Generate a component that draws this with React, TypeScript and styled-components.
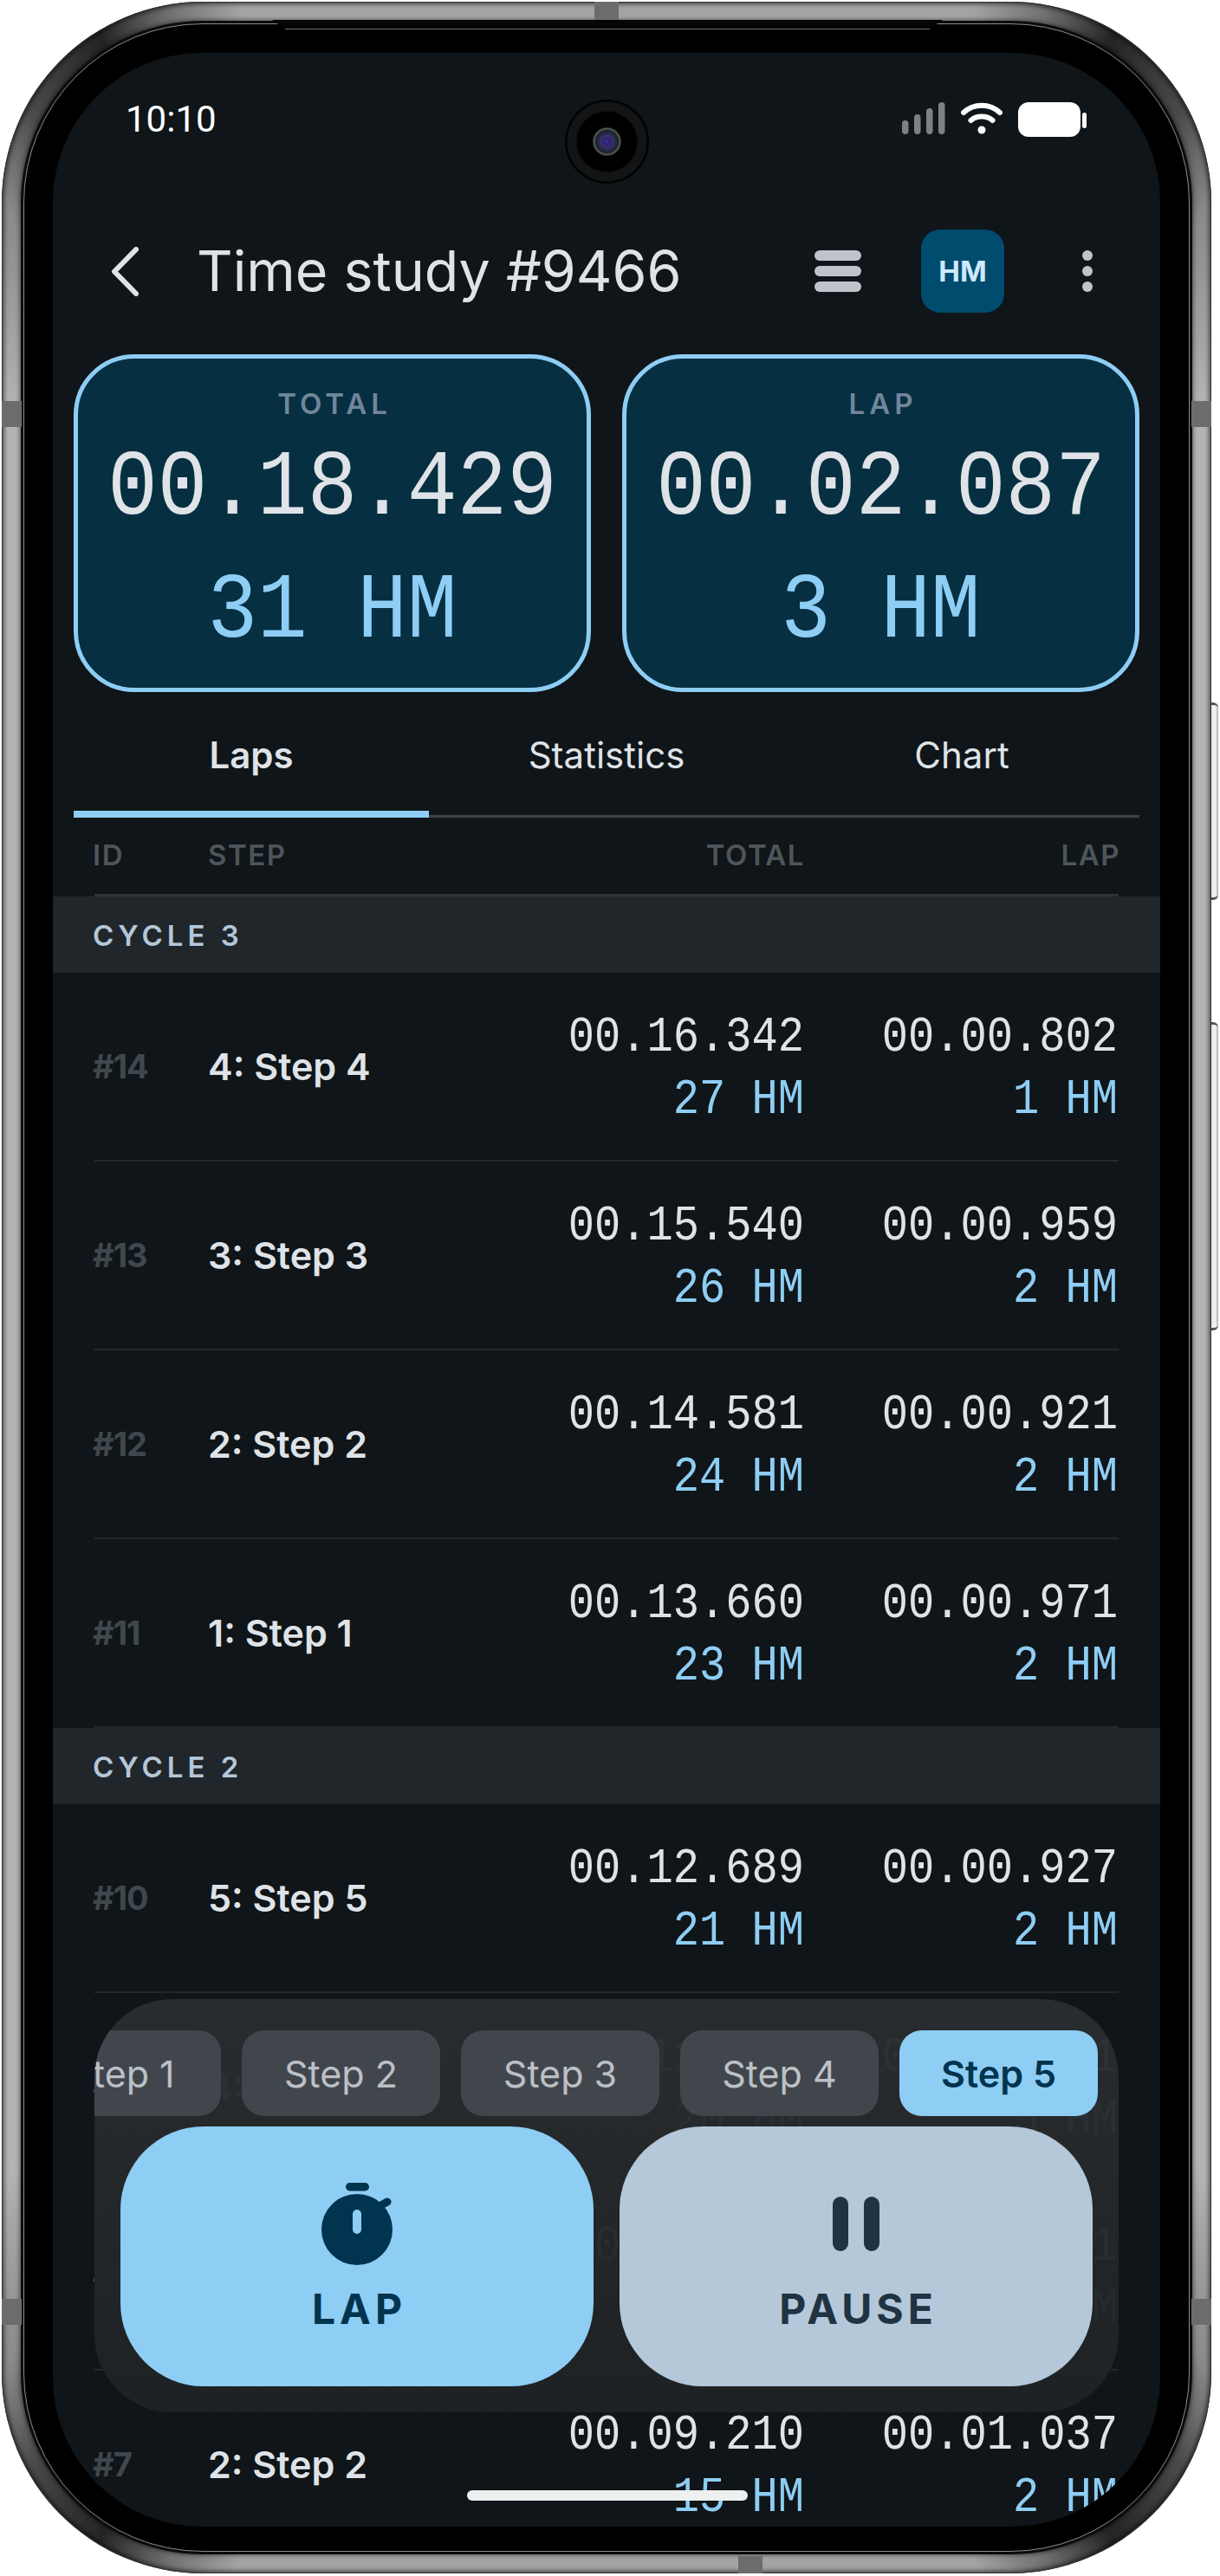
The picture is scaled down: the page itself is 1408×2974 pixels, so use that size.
import React from 'react';
import styled, {createGlobalStyle, css} from 'styled-components';

const GlobalStyle = createGlobalStyle`
  html, body {
    margin: 0;
    padding: 0;
    background: #fff;
  }
  * {
    box-sizing: border-box;
  }
`;

const SKY = '#8ecdf4';
const TEXT = '#dfe3e8';
const NAVY = '#00344f';
const SLATE = '#203342';
const MONO = '"Liberation Mono", monospace';
const SANS = 'Inter, "Noto Sans", sans-serif';

const Stage = styled.div`
  width: 1408px;
  height: 2974px;
  padding: 2px 0 0 2px;
  overflow: hidden;
`;

const Phone = styled.div`
  position: relative;
  width: 1396px;
  height: 2969px;
  padding: 25px;
  border-radius: 232px;
  background: conic-gradient(
    #a4a4a4 0deg, #a4a4a4 16deg, #707070 19deg, #242424 22deg, #4a4a4a 26deg, #8a8a8a 29deg,
    #b4b4b4 34deg, #b4b4b4 146deg, #8a8a8a 151deg, #4a4a4a 154deg, #242424 158deg, #707070 161deg,
    #a4a4a4 164deg, #a4a4a4 196deg, #707070 199deg, #242424 202deg, #4a4a4a 206deg, #8a8a8a 209deg,
    #b4b4b4 214deg, #b4b4b4 326deg, #8a8a8a 331deg, #4a4a4a 334deg, #242424 338deg, #707070 341deg,
    #a4a4a4 344deg
  );
  box-shadow: inset 0 0 0 1px #333, inset 0 0 5px 3px rgba(0, 0, 0, 0.55);
`;

const bandPlaces = {
  leftTop: css`left: 0; top: 461px; width: 23px; height: 30px;`,
  rightTop: css`right: 0; top: 461px; width: 23px; height: 30px;`,
  leftBottom: css`left: 0; top: 2652px; width: 23px; height: 30px;`,
  rightBottom: css`right: 0; top: 2652px; width: 23px; height: 30px;`,
  top: css`left: 684px; top: 0; width: 28px; height: 23px;`,
  bottom: css`left: 850px; bottom: 0; width: 28px; height: 20px;`,
};

const Band = styled.i<{$at: keyof typeof bandPlaces}>`
  position: absolute;
  background: #6b6d6b;
  ${p => bandPlaces[p.$at]}
`;

const SideKey = styled.i<{$top: number; $height: number}>`
  position: absolute;
  right: -8px;
  top: ${p => p.$top}px;
  width: 8px;
  height: ${p => p.$height}px;
  background: linear-gradient(90deg, #e8e8e8, #f4f4f4 60%, #a8a8a8);
  border-radius: 0 6px 6px 0;
  border-top: 3px solid #555;
  border-bottom: 3px solid #555;
`;

const Lip = styled.i`
  position: absolute;
  left: 312px;
  top: 21px;
  width: 774px;
  height: 11px;
  background: #050505;
  border-bottom: 1.5px solid #6e6e6e;
  clip-path: polygon(0 0, 100% 0, 98% 100%, 2% 100%);
`;

const Bezel = styled.div`
  height: 100%;
  padding: 33px;
  border-radius: 207px;
  background: #000;
  border: 1px solid #8c8c8c;
  box-shadow: 0 0 0 3px #0c0c0c, 0 0 5px 4px rgba(0, 0, 0, 0.5);
`;

const Screen = styled.div`
  position: relative;
  height: 2856px;
  border-radius: 172px;
  overflow: hidden;
  background: #0f1518;
  font-family: ${SANS};
  color: ${TEXT};
`;

const Camera = styled.i`
  position: absolute;
  left: 591px;
  top: 54px;
  width: 97px;
  height: 97px;
  border-radius: 50%;
  background: radial-gradient(
    circle at 50% 50%,
    #3f32b8 0, #2c2468 3px, #3d2c6e 7px, #1a2a3e 11px, #222 13px, #5e5e5e 15px, #000 17px,
    #000 34px, #131415 36px, #131415 45px, #000 47px
  );
`;

const StatusBar = styled.div`
  height: 204px;
  padding: 53px 84px 0 84px;
  display: flex;
  justify-content: space-between;
  align-items: flex-start;
`;

const Clock = styled.span`
  font-family: Roboto, sans-serif;
  font-size: 42px;
  line-height: 48px;
  color: #fff;
`;

const StatusIcons = styled.div`
  display: flex;
  align-items: flex-start;
  gap: 18px;
  margin-top: 4px;
`;

const Header = styled.header`
  height: 96px;
  padding-left: 67px;
  padding-right: 78px;
  display: flex;
  align-items: center;
`;

const Title = styled.h1`
  margin: 0 auto 0 66px;
  font-size: 64.5px;
  font-weight: 400;
  line-height: 96px;
  color: ${TEXT};
`;

const Stack = styled.div`
  width: 54px;
  display: flex;
  flex-direction: column;
  gap: 6px;

  > i {
    height: 12px;
    border-radius: 6px;
    background: #bfc4cb;
  }
`;

const Badge = styled.div`
  width: 96px;
  height: 96px;
  margin: 0 90px 0 69px;
  border-radius: 22px;
  background: #004c6e;
  color: #cfe9fb;
  font-size: 33px;
  font-weight: 700;
  display: flex;
  align-items: center;
  justify-content: center;
`;

const Dots = styled.div`
  width: 12px;
  display: flex;
  flex-direction: column;
  gap: 6px;

  > i {
    height: 12px;
    border-radius: 50%;
    background: #bfc4cb;
  }
`;

const Cards = styled.div`
  margin-top: 48px;
  padding: 0 24px;
  display: grid;
  grid-template-columns: 1fr 1fr;
  gap: 36px;
`;

const Card = styled.section`
  height: 390px;
  padding-top: 32px;
  border: 5px solid ${SKY};
  border-radius: 70px;
  background: #062f41;
  display: flex;
  flex-direction: column;
  align-items: center;
`;

const CardLabel = styled.div`
  font-size: 33px;
  line-height: 40px;
  font-weight: 600;
  letter-spacing: 5px;
  padding-left: 5px;
  color: #71869a;
`;

const monoStretch = css`
  font-family: ${MONO};
  white-space: pre;
  transform: scaleY(1.13);
`;

const CardTime = styled.div`
  ${monoStretch};
  margin-top: 19px;
  font-size: 96px;
  line-height: 120px;
  color: ${TEXT};
`;

const CardUnits = styled.div`
  ${monoStretch};
  margin-top: 22px;
  font-size: 96px;
  line-height: 120px;
  color: ${SKY};
`;

const Tabs = styled.nav`
  margin: 0 24px;
  height: 145px;
  display: grid;
  grid-template-columns: repeat(3, 1fr);
  border-bottom: 3px solid #3e4347;
`;

const Tab = styled.div<{$active?: boolean}>`
  height: 145px;
  padding-top: 48px;
  text-align: center;
  font-size: 42px;
  line-height: 50px;
  font-weight: ${p => (p.$active ? 600 : 400)};
  color: ${TEXT};
  border-bottom: ${p => (p.$active ? `8px solid ${SKY}` : '0')};
`;

const TableHead = styled.div`
  margin: 0 48px;
  height: 91px;
  padding-bottom: 2px;
  display: grid;
  grid-template-columns: 133px 1fr 280px 362px;
  align-items: center;
  border-bottom: 3px solid #2f3438;
  font-size: 33px;
  font-weight: 600;
  letter-spacing: 1.5px;
  color: #4e555a;
`;

const LeftCell = styled.div`
  margin-left: -2px;
`;

const RightCell = styled.div`
  margin-right: -2px;
  text-align: right;
`;

const TotalHead = styled(RightCell)`
  margin-right: 0;
  grid-column: 3;
  margin-left: -80px;
`;

const GroupHead = styled.div`
  height: 88px;
  padding-left: 46px;
  background: #20262a;
  font-size: 33px;
  line-height: 90px;
  font-weight: 600;
  letter-spacing: 5px;
  color: #b3c7d9;
`;

const Row = styled.div`
  margin: 0 48px;
  height: 218px;
  display: grid;
  grid-template-columns: 133px 1fr 280px 362px;
  align-items: center;
  border-bottom: 2px solid #22282c;
`;

const LapId = styled(LeftCell)`
  font-size: 38px;
  font-weight: 700;
  letter-spacing: -1px;
  color: #40474c;
`;

const StepName = styled(LeftCell)`
  font-size: 43px;
  font-weight: 600;
  color: ${TEXT};
`;

const Reading = styled.div`
  padding-top: 6px;
  margin-right: 1px;
  text-align: right;
`;

const ReadTime = styled.div`
  ${monoStretch};
  font-size: 50.4px;
  line-height: 72px;
  color: ${TEXT};
`;

const ReadUnits = styled.div`
  ${monoStretch};
  font-size: 50.4px;
  line-height: 72px;
  color: ${SKY};
`;

const Panel = styled.div`
  position: absolute;
  left: 48px;
  right: 48px;
  bottom: 132px;
  padding: 36px 30px 30px;
  border-radius: 90px;
  overflow: hidden;
  background: linear-gradient(180deg, rgba(41, 45, 48, 0.97), rgba(30, 34, 37, 0.97));
`;

const ChipRow = styled.div`
  margin: 0 -6px 12px -30px;
  display: flex;
  justify-content: flex-end;
  gap: 24px;
`;

const Chip = styled.div<{$active?: boolean}>`
  flex: 0 0 229px;
  height: 99px;
  border-radius: 26px;
  display: flex;
  align-items: center;
  justify-content: center;
  font-size: 43px;
  font-weight: ${p => (p.$active ? 600 : 400)};
  background: ${p => (p.$active ? SKY : '#41464d')};
  color: ${p => (p.$active ? NAVY : '#bcc0c6')};
`;

const Actions = styled.div`
  display: grid;
  grid-template-columns: 1fr 1fr;
  gap: 30px;
`;

const BigButton = styled.button<{$bg: string; $fg: string}>`
  height: 300px;
  padding: 60px 0 0 5px;
  border: 0;
  border-radius: 96px;
  font-family: ${SANS};
  font-size: 48px;
  line-height: 60px;
  font-weight: 700;
  letter-spacing: 5px;
  background: ${p => p.$bg};
  color: ${p => p.$fg};
  display: flex;
  flex-direction: column;
  align-items: center;
  justify-content: flex-start;

  > svg {
    display: block;
    margin: 0 0 21px -5px;
  }
`;

const HomeBar = styled.i`
  position: absolute;
  left: 478px;
  bottom: 30px;
  width: 324px;
  height: 12px;
  border-radius: 6px;
  background: #eef0ef;
`;

type Lap = {id: number; step: string; total: string; totalHm: string; lap: string; lapHm: string};

const cycle3: Lap[] = [
  {id: 14, step: '4: Step 4', total: '00.16.342', totalHm: '27 HM', lap: '00.00.802', lapHm: '1 HM'},
  {id: 13, step: '3: Step 3', total: '00.15.540', totalHm: '26 HM', lap: '00.00.959', lapHm: '2 HM'},
  {id: 12, step: '2: Step 2', total: '00.14.581', totalHm: '24 HM', lap: '00.00.921', lapHm: '2 HM'},
  {id: 11, step: '1: Step 1', total: '00.13.660', totalHm: '23 HM', lap: '00.00.971', lapHm: '2 HM'},
];

const cycle2: Lap[] = [
  {id: 10, step: '5: Step 5', total: '00.12.689', totalHm: '21 HM', lap: '00.00.927', lapHm: '2 HM'},
  {id: 9, step: '4: Step 4', total: '00.11.762', totalHm: '20 HM', lap: '00.03.581', lapHm: '5 HM'},
  {id: 8, step: '3: Step 3', total: '00.08.173', totalHm: '14 HM', lap: '00.00.961', lapHm: '2 HM'},
  {id: 7, step: '2: Step 2', total: '00.09.210', totalHm: '15 HM', lap: '00.01.037', lapHm: '2 HM'},
];

const LapRow: React.FC<{lap: Lap}> = ({lap}) => (
  <Row>
    <LapId>#{lap.id}</LapId>
    <StepName>{lap.step}</StepName>
    <Reading>
      <ReadTime>{lap.total}</ReadTime>
      <ReadUnits>{lap.totalHm}</ReadUnits>
    </Reading>
    <Reading>
      <ReadTime>{lap.lap}</ReadTime>
      <ReadUnits>{lap.lapHm}</ReadUnits>
    </Reading>
  </Row>
);

const SignalIcon = () => (
  <svg width="50" height="37" viewBox="0 0 50 37" fill="#7d8184">
    <rect x="0" y="21" width="7.5" height="16" rx="3.7"/>
    <rect x="14" y="14" width="7.5" height="23" rx="3.7"/>
    <rect x="28" y="7" width="7.5" height="30" rx="3.7"/>
    <rect x="42" y="0" width="7.5" height="37" rx="3.7"/>
  </svg>
);

const WifiIcon = () => (
  <svg width="48" height="37" viewBox="0 0 48 37" fill="none" stroke="#fff" strokeWidth="6" strokeLinecap="round">
    <path d="M3 12C15 1 33 1 45 12"/>
    <path d="M11.5 21C18 15 30 15 36.5 21"/>
    <circle cx="24" cy="32" r="4.5" fill="#fff" stroke="none"/>
  </svg>
);

const BatteryIcon = () => (
  <svg width="80" height="40" viewBox="0 0 80 40" fill="#fff">
    <rect x="0" y="0" width="72" height="40" rx="12"/>
    <rect x="74" y="12" width="5" height="18" rx="2.5"/>
  </svg>
);

const BackIcon = () => (
  <svg width="33" height="57" viewBox="0 0 33 57" fill="none" stroke={TEXT} strokeWidth="6" strokeLinecap="round" strokeLinejoin="round">
    <path d="M29 3L4 28.5L29 54"/>
  </svg>
);

const StopwatchIcon = () => (
  <svg width="100" height="100" viewBox="0 0 100 100">
    <rect x="37" y="5" width="27" height="9.5" rx="4.7" fill={NAVY}/>
    <circle cx="50" cy="59" r="41" fill={NAVY}/>
    <path d="M76 32L85 27" stroke={NAVY} strokeWidth="9" strokeLinecap="round"/>
    <rect x="45" y="36" width="10" height="28" rx="5" fill={SKY}/>
  </svg>
);

const PauseIcon = () => (
  <svg width="100" height="100" viewBox="0 0 100 100" fill={SLATE}>
    <rect x="23" y="21" width="18" height="63" rx="9"/>
    <rect x="59" y="21" width="18" height="63" rx="9"/>
  </svg>
);

const App: React.FC = () => (
  <>
    <GlobalStyle/>
    <Stage>
      <Phone>
        <Band $at="top"/>
        <Band $at="bottom"/>
        <Band $at="leftTop"/>
        <Band $at="rightTop"/>
        <Band $at="leftBottom"/>
        <Band $at="rightBottom"/>
        <SideKey $top={809} $height={228}/>
        <SideKey $top={1178} $height={356}/>
        <Lip/>
        <Bezel>
          <Screen>
            <Camera/>
            <StatusBar>
              <Clock>10:10</Clock>
              <StatusIcons>
                <SignalIcon/>
                <WifiIcon/>
                <BatteryIcon/>
              </StatusIcons>
            </StatusBar>
            <Header>
              <BackIcon/>
              <Title>Time study #9466</Title>
              <Stack><i/><i/><i/></Stack>
              <Badge>HM</Badge>
              <Dots><i/><i/><i/></Dots>
            </Header>
            <Cards>
              <Card>
                <CardLabel>TOTAL</CardLabel>
                <CardTime>00.18.429</CardTime>
                <CardUnits>31 HM</CardUnits>
              </Card>
              <Card>
                <CardLabel>LAP</CardLabel>
                <CardTime>00.02.087</CardTime>
                <CardUnits>3 HM</CardUnits>
              </Card>
            </Cards>
            <Tabs>
              <Tab $active>Laps</Tab>
              <Tab>Statistics</Tab>
              <Tab>Chart</Tab>
            </Tabs>
            <TableHead>
              <LeftCell>ID</LeftCell>
              <LeftCell>STEP</LeftCell>
              <TotalHead>TOTAL</TotalHead>
              <RightCell>LAP</RightCell>
            </TableHead>
            <GroupHead>CYCLE 3</GroupHead>
            {cycle3.map(lap => <LapRow key={lap.id} lap={lap}/>)}
            <GroupHead>CYCLE 2</GroupHead>
            {cycle2.map(lap => <LapRow key={lap.id} lap={lap}/>)}
            <Panel>
              <ChipRow>
                {['Step 1', 'Step 2', 'Step 3', 'Step 4'].map(name => <Chip key={name}>{name}</Chip>)}
                <Chip $active>Step 5</Chip>
              </ChipRow>
              <Actions>
                <BigButton $bg={SKY} $fg={NAVY}>
                  <StopwatchIcon/>
                  LAP
                </BigButton>
                <BigButton $bg="#b4c8d9" $fg={SLATE}>
                  <PauseIcon/>
                  PAUSE
                </BigButton>
              </Actions>
            </Panel>
            <HomeBar/>
          </Screen>
        </Bezel>
      </Phone>
    </Stage>
  </>
);

export default App;
